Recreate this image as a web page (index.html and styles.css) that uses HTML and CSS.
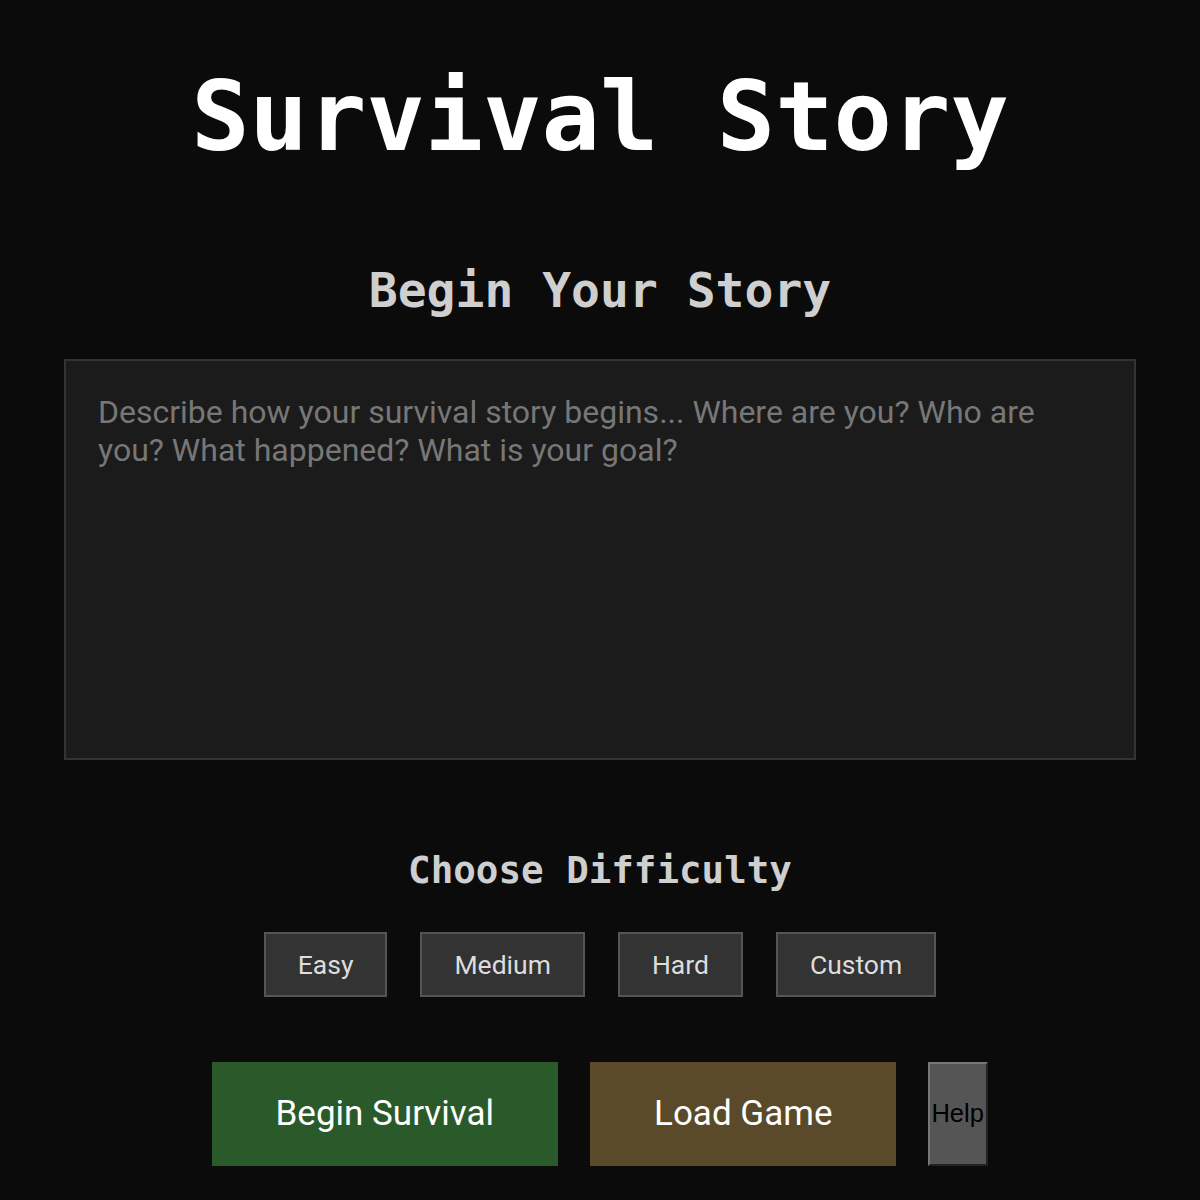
FILE: index.html
```html
<!DOCTYPE html>
<html lang="en">
<head>
    <meta charset="UTF-8">
    <title>Survival Story</title>
    <link rel="stylesheet" href="styles.css">
</head>
<body>
<div class="page">
    <h1 class="title">Survival Story</h1>

    <h2 class="section-title">Begin Your Story</h2>
    <textarea class="story" placeholder="Describe how your survival story begins... Where are you? Who are you? What happened? What is your goal?"></textarea>

    <h2 class="section-title difficulty-title">Choose Difficulty</h2>
    <div class="difficulty">
        <button class="diff-btn">Easy</button>
        <button class="diff-btn">Medium</button>
        <button class="diff-btn">Hard</button>
        <button class="diff-btn">Custom</button>
    </div>

    <div class="actions">
        <button class="big-btn start">Begin Survival</button>
        <button class="big-btn load">Load Game</button>
        <button class="help">Help</button>
    </div>
</div>
</body>
</html>
```

FILE: styles.css
```css
body, h1, h2 {
    margin: 0;
    padding: 0;
}

body {
    background: #0b0b0b;
    color: #fff;
    font-family: Roboto, "Liberation Sans", sans-serif;
}

.page {
    width: 1072px;
    margin: 0 auto;
    display: flex;
    flex-direction: column;
    align-items: center;
}

.title {
    margin-top: 68px;
    font-family: "DejaVu Sans Mono", monospace;
    font-weight: bold;
    font-size: 97px;
    line-height: 1;
    color: #fff;
}

.section-title {
    margin-top: 101px;
    font-family: "DejaVu Sans Mono", monospace;
    font-weight: bold;
    font-size: 48px;
    line-height: 1;
    color: #cfcfcf;
}

.story {
    box-sizing: border-box;
    width: 1072px;
    height: 401px;
    margin-top: 45px;
    padding: 32px 32px;
    background: #1b1b1b;
    border: 2px solid #333;
    color: #ddd;
    font-family: Roboto, sans-serif;
    font-size: 32px;
    line-height: 38px;
    resize: none;
    outline: none;
}

.story::placeholder {
    color: #777;
}

.difficulty-title {
    margin-top: 92px;
    font-size: 37.5px;
}

.difficulty {
    margin-top: 42px;
    display: flex;
    gap: 33px;
}

.diff-btn {
    height: 65px;
    padding: 0 32px;
    background: #333;
    border: 2px solid #555;
    color: #ddd;
    font-family: Roboto, sans-serif;
    font-size: 26.5px;
    cursor: pointer;
}

.actions {
    margin-top: 65px;
    display: flex;
    gap: 32px;
}

.big-btn {
    height: 104px;
    padding: 0 64px;
    border: none;
    color: #fff;
    font-family: Roboto, sans-serif;
    font-size: 35px;
    cursor: pointer;
}

.start {
    background: #2a5a2a;
}

.load {
    background: #5a4a2a;
}

.help {
    width: 60px;
    height: 104px;
    padding: 0 0 0 1px;
    background: #555;
    border: 2px outset #777;
    color: #000;
    font-family: "Liberation Sans", sans-serif;
    font-size: 25.5px;
    text-align: left;
    white-space: nowrap;
    overflow: hidden;
    cursor: pointer;
}
```
